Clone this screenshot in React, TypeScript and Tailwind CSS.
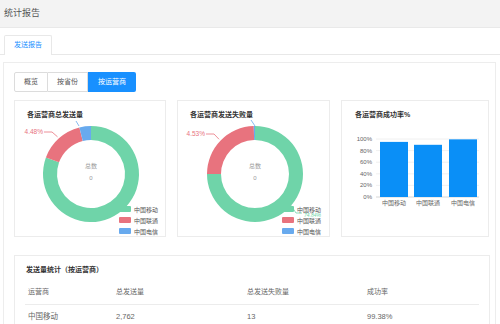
import React from "react";

const GREEN = "#6fd4a9";
const RED = "#e8737e";
const BLUE = "#68aaee";

type Seg = { from: number; to: number; color: string };

function pt(cx: number, cy: number, r: number, a: number) {
  const rad = (a * Math.PI) / 180;
  return [cx + r * Math.sin(rad), cy - r * Math.cos(rad)];
}

function arcPath(cx: number, cy: number, r0: number, r1: number, a0: number, a1: number) {
  const large = a1 - a0 > 180 ? 1 : 0;
  const [x1, y1] = pt(cx, cy, r1, a0);
  const [x2, y2] = pt(cx, cy, r1, a1);
  const [x3, y3] = pt(cx, cy, r0, a1);
  const [x4, y4] = pt(cx, cy, r0, a0);
  return `M${x1} ${y1} A${r1} ${r1} 0 ${large} 1 ${x2} ${y2} L${x3} ${y3} A${r0} ${r0} 0 ${large} 0 ${x4} ${y4} Z`;
}

function Legend() {
  const items = [
    { name: "中国移动", color: GREEN },
    { name: "中国联通", color: RED },
    { name: "中国电信", color: BLUE },
  ];
  return (
    <g>
      {items.map((it, i) => (
        <g key={it.name}>
          <rect x={104} y={86 + i * 11} width={12} height={6} rx={1} fill={it.color} />
          <text x={119} y={91.5 + i * 11} fontSize={6} fill="#555">
            {it.name}
          </text>
        </g>
      ))}
    </g>
  );
}

type DonutProps = {
  title: string;
  cx: number;
  segs: Seg[];
  label: string;
  labelY: number;
  labelEnd: number;
  mid: number;
  blueLine: [number, number, number, number];
  extra?: React.ReactNode;
};

function DonutCard({ title, cx, segs, label, labelY, labelEnd, mid, blueLine, extra }: DonutProps) {
  const cy = 54;
  const [ex, ey] = pt(cx, cy, 50, mid);
  return (
    <div className="h-[137px] border border-[#ececec] bg-white">
      <div className="pl-[12px] pt-[9px] text-[7px] font-bold leading-[10px] text-[#333]">{title}</div>
      <svg width={150} height={115} className="overflow-visible">
        {segs.map((s, i) => (
          <path key={i} d={arcPath(cx, cy, 34, 48, s.from, s.to)} fill={s.color} />
        ))}
        <line x1={blueLine[0]} y1={blueLine[1]} x2={blueLine[2]} y2={blueLine[3]} stroke={BLUE} strokeWidth={0.8} />
        <polyline
          points={`${labelEnd + 1},${labelY} ${labelEnd + 9},${labelY} ${ex},${ey}`}
          fill="none"
          stroke={RED}
          strokeWidth={0.8}
        />
        <text x={labelEnd} y={labelY + 2} fontSize={6.5} fill={RED} textAnchor="end">
          {label}
        </text>
        <text x={cx} y={48} fontSize={6} fill="#999" textAnchor="middle">
          总数
        </text>
        <text x={cx} y={60} fontSize={6} fill="#999" textAnchor="middle">
          0
        </text>
        {extra}
        <Legend />
      </svg>
    </div>
  );
}

function BarCard() {
  const ticks = ["100%", "80%", "60%", "40%", "20%", "0%"];
  const bars = [
    { name: "中国移动", x: 38, v: 0.95 },
    { name: "中国联通", x: 72, v: 0.9 },
    { name: "中国电信", x: 107, v: 0.9938 },
  ];
  const top = 19;
  const bottom = 77;
  return (
    <div className="h-[137px] border border-[#ececec] bg-white">
      <div className="pl-[13px] pt-[9px] text-[7px] font-semibold leading-[10px] text-[#333]">各运营商成功率%</div>
      <svg width={146} height={115}>
        {ticks.map((t, i) => {
          const y = top + ((bottom - top) / 5) * i;
          return (
            <g key={t}>
              <line x1={34} y1={y} x2={137} y2={y} stroke={i === 5 ? "#ccc" : "#ececec"} strokeWidth={0.8} />
              <text x={30} y={y + 2} fontSize={6} fill="#666" textAnchor="end">
                {t}
              </text>
            </g>
          );
        })}
        {bars.map((b) => {
          const h = (bottom - top) * b.v;
          return (
            <g key={b.name}>
              <rect x={b.x} y={bottom - h} width={28} height={h} fill="#0a8ff7" />
              <text x={b.x + 14} y={85} fontSize={6} fill="#666" textAnchor="middle">
                {b.name}
              </text>
            </g>
          );
        })}
      </svg>
    </div>
  );
}

export default function App() {
  const cols = "grid-cols-[88px_131px_120px_1fr]";
  return (
    <div className="h-[324px] w-[500px] overflow-hidden bg-white font-['Liberation_Sans','Noto_Sans_CJK_SC',sans-serif]">
      <div className="flex h-[28px] items-center border-b border-[#e9e9e9] bg-[#f3f3f3] pl-[4px] text-[9px] text-[#555]">
        统计报告
      </div>

      <div className="mt-[7px] flex items-end">
        <div className="w-[4px] self-stretch border-b border-[#e8e8e8]" />
        <div className="flex h-[20px] w-[48px] items-center justify-center rounded-t-[2px] border border-b-0 border-[#e8e8e8] text-[7px] text-[#1890ff]">
          发送报告
        </div>
        <div className="h-[20px] flex-1 border-b border-[#e8e8e8]" />
      </div>

      <div className="ml-[3px] mr-[4px] mt-[7px] h-[300px] border border-[#ededed] pl-[10px] pt-[9px]">
        <div className="flex h-[20px] text-[7px] text-[#555]">
          <div className="flex w-[34px] items-center justify-center rounded-l-[2px] border border-[#dcdcdc]">概览</div>
          <div className="flex w-[40px] items-center justify-center border-y border-r border-[#dcdcdc]">按省份</div>
          <div className="flex w-[48px] items-center justify-center rounded-r-[2px] bg-[#1890ff] text-white">按运营商</div>
        </div>

        <div className="mt-[8px] grid grid-cols-[152px_153px_148px] gap-[11px]">
          <DonutCard
            title="各运营商总发送量"
            cx={76}
            segs={[
              { from: 0, to: 290, color: GREEN },
              { from: 290, to: 346, color: RED },
              { from: 346, to: 360, color: BLUE },
            ]}
            label="4.48%"
            labelY={12}
            labelEnd={28}
            mid={318}
            blueLine={[64, 6, 61, 1]}
          />
          <DonutCard
            title="各运营商发送失败量"
            cx={77}
            segs={[
              { from: 0, to: 270, color: GREEN },
              { from: 270, to: 358.5, color: RED },
              { from: 358.5, to: 360, color: BLUE },
            ]}
            label="4.53%"
            labelY={14}
            labelEnd={27}
            mid={314}
            blueLine={[77, 6, 73, 0]}
            extra={
              <g>
                <polyline points="112,84 118,93 124,93" fill="none" stroke={GREEN} strokeWidth={0.8} />
                <text x={126} y={96.5} fontSize={5} fontStyle="italic" fill={GREEN}>
                  74.84%
                </text>
              </g>
            }
          />
          <BarCard />
        </div>

        <div className="mt-[18px] h-[80px] w-[476px] border border-[#ececec] bg-white px-[10px] pt-[9px]">
          <div className="pl-[1px] text-[7px] font-bold leading-[10px] text-[#333]">发送量统计（按运营商）</div>
          <div className={`mt-[5px] grid h-[25px] ${cols} items-center border-b border-[#ececec] pl-[3px] text-[7px] text-[#666]`}>
            <div>运营商</div>
            <div>总发送量</div>
            <div>总发送失败量</div>
            <div>成功率</div>
          </div>
          <div className={`grid h-[24px] ${cols} items-center pl-[3px] text-[7.5px] text-[#666]`}>
            <div>中国移动</div>
            <div>2,762</div>
            <div>13</div>
            <div>99.38%</div>
          </div>
        </div>
      </div>
    </div>
  );
}
